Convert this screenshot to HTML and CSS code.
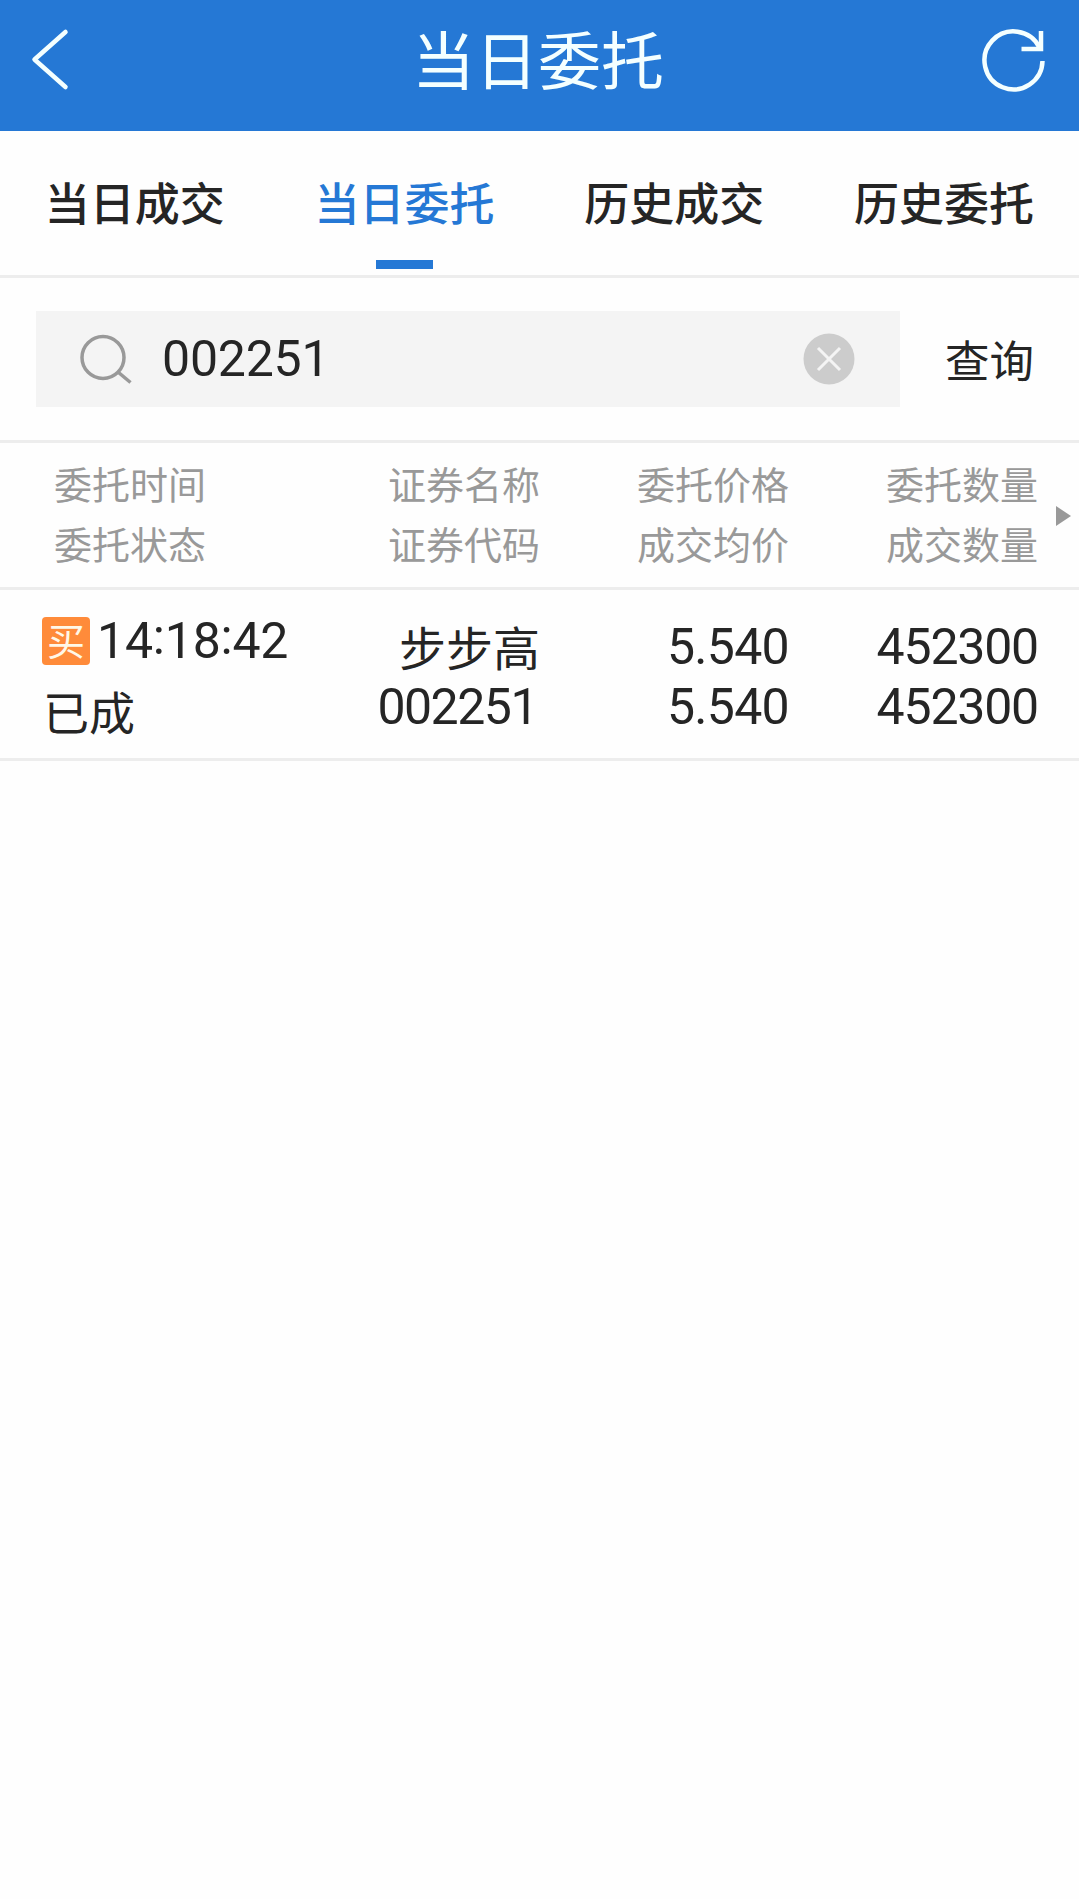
FILE: index.html
```html
<!DOCTYPE html>
<html lang="zh-CN">
<head>
<meta charset="utf-8">
<title>当日委托</title>
<link rel="stylesheet" href="styles.css">
</head>
<body>
<header class="topbar">
  <svg class="icon-back" width="40" height="66" viewBox="0 0 40 66"><path d="M34.500 4L3.500 31.500L34.500 59"/></svg>
  <h1 class="title">当日委托</h1>
  <svg class="icon-refresh" width="66" height="66" viewBox="0 0 66 66"><path d="M62.500 33A29 29 0 1 1 59.500 19.500"/><path class="miter" d="M61 3V21H41.500"/></svg>
</header>
<nav class="tabs">
  <a class="tab">当日成交</a>
  <a class="tab active">当日委托</a>
  <a class="tab">历史成交</a>
  <a class="tab">历史委托</a>
</nav>
<section class="search">
  <div class="field">
    <svg class="icon-search" width="52" height="50" viewBox="0 0 52 50"><circle cx="23" cy="23.500" r="21"/><path d="M38 38L50.500 48.500"/></svg>
    <span class="keyword">002251</span>
    <svg class="icon-clear" width="52" height="52" viewBox="0 0 52 52"><circle cx="26" cy="26" r="25.500"/><path d="M15 15L37 37M37 15L15 37"/></svg>
  </div>
  <a class="query">查询</a>
</section>
<section class="row head">
  <div class="cell first">委托时间<br>委托状态</div>
  <div class="cell">证券名称<br>证券代码</div>
  <div class="cell">委托价格<br>成交均价</div>
  <div class="cell">委托数量<br>成交数量</div>
  <svg class="more" width="15" height="20" viewBox="0 0 15 20"><path d="M0 0L15 10L0 20Z"/></svg>
</section>
<section class="row order">
  <div class="cell first">
    <div class="time"><span class="badge">买</span><span class="clock">14<i>:</i>18<i>:</i>42</span></div>
    <div class="status">已成</div>
  </div>
  <div class="cell"><div class="name">步步高</div><div class="num code">002251</div></div>
  <div class="cell"><div class="num price">5.540</div><div class="num price">5.540</div></div>
  <div class="cell"><div class="num">452300</div><div class="num">452300</div></div>
</section>
</body>
</html>
```
FILE: styles.css
```css
* { box-sizing: border-box; }
body {
  margin: 0;
  min-height: 1899px;
  background: #fefefe;
  color: #252525;
  font-family: "Noto Sans CJK SC", sans-serif;
}
svg { flex: none; fill: none; }

.topbar {
  display: flex;
  justify-content: space-between;
  align-items: flex-start;
  height: 131px;
  padding: 28px 33px 0 31px;
  background: #2578d5;
}
.topbar svg { stroke: #f4ffff; stroke-width: 4.500; stroke-linejoin: round; stroke-linecap: round; }
.topbar .icon-refresh { stroke-linecap: butt; }
.topbar .miter { stroke-linejoin: miter; }
.title {
  margin: -16px 0 0 25px;
  font-size: 63px;
  font-weight: 400;
  line-height: 90px;
  color: #f4ffff;
}

.tabs {
  display: flex;
  height: 147px;
  border-bottom: 3px solid #ededed;
}
.tab {
  flex: 1;
  display: flex;
  flex-direction: column;
  align-items: center;
  padding-top: 41px;
  font-size: 45px;
  font-weight: 500;
  line-height: 60px;
}
.active { color: #2578d5; }
.active::after {
  content: "";
  width: 57px;
  height: 9px;
  margin-top: 28px;
  background: #2578d5;
}

.search {
  display: flex;
  height: 165px;
  padding: 33px 0 0 36px;
  border-bottom: 3px solid #ededed;
}
.field {
  display: flex;
  align-items: center;
  width: 864px;
  height: 96px;
  padding: 0 45px 0 44px;
  background: #f4f4f4;
}
.icon-search { stroke: #999; stroke-width: 3.500; }
.keyword {
  flex: 1;
  margin-left: 30px;
  font: 50px/60px Roboto, sans-serif;
  letter-spacing: -0.200px;
}
.icon-clear circle { fill: #ccc; }
.icon-clear path { stroke: #f4f4f4; stroke-width: 3; }
.query {
  flex: 1;
  text-align: center;
  font-size: 44.500px;
  line-height: 96px;
}

.row {
  position: relative;
  display: grid;
  grid-template-columns: 291px 249px 249px 249px;
  border-bottom: 3px solid #ededed;
}
.cell { text-align: right; }
.first { text-align: left; }

.head {
  height: 147px;
  padding-top: 10px;
  font-size: 38px;
  line-height: 60px;
  color: #999;
}
.head .first { padding-left: 54px; }
.more { position: absolute; left: 1056px; top: 63px; fill: #999; }

.order { height: 171px; padding-top: 27px; }
.time { display: flex; align-items: center; padding-left: 42px; }
.badge {
  width: 48px;
  height: 48px;
  border-radius: 4px;
  background: #ff8b3a;
  color: #fff8e8;
  font-size: 38px;
  line-height: 44px;
  text-align: center;
}
.clock {
  margin-left: 7px;
  font: 50px/48px Roboto, sans-serif;
  letter-spacing: -0.200px;
}
.clock i { position: relative; top: -4px; font-style: normal; }
.status {
  padding-left: 43px;
  margin-top: 15px;
  font-size: 46px;
  line-height: 60px;
}
.name { font-size: 47px; line-height: 60px; margin-top: -1px; margin-bottom: 1px; }
.num {
  font: 50px/60px Roboto, sans-serif;
  letter-spacing: -1.200px;
}
.code { padding-right: 3px; letter-spacing: -1.500px; }
.price { letter-spacing: -0.700px; }
```
